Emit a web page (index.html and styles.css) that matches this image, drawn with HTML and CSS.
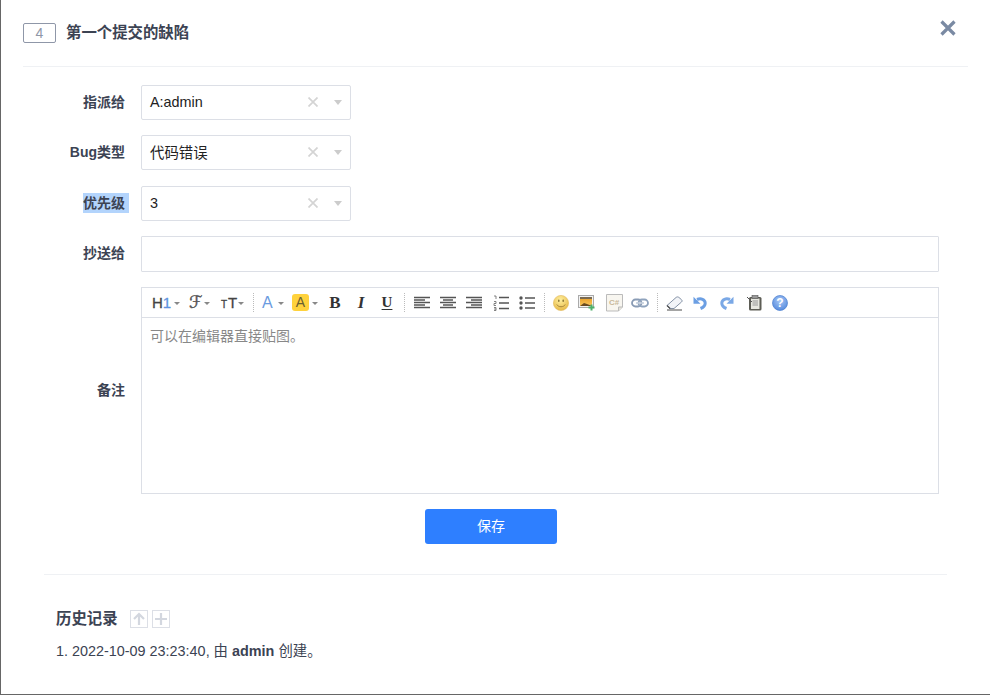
FILE: index.html
```html
<!DOCTYPE html>
<html lang="zh">
<head>
<meta charset="utf-8">
<title>第一个提交的缺陷</title>
<link rel="stylesheet" href="styles.css">
</head>
<body>
<div class="page">
  <header class="head">
    <span class="bug-id">4</span>
    <h1 class="bug-title">第一个提交的缺陷</h1>
    <svg class="close" width="18" height="18" viewBox="0 0 18 18"><path d="M2.500 2.500 15.500 15.500M15.500 2.500 2.500 15.500" stroke="#7a8aa3" stroke-width="3.200" fill="none"/></svg>
  </header>
  <form class="form">
    <div class="row">
      <label class="lbl">指派给</label>
      <div class="select"><span class="val">A:admin</span><svg class="clear" width="10" height="10" viewBox="0 0 10 10"><path d="M.5.500l9 9M9.500.500l-9 9" stroke="#d4d4d4" stroke-width="1.700"/></svg><span class="arrow"></span></div>
    </div>
    <div class="row r2">
      <label class="lbl">Bug类型</label>
      <div class="select"><span class="val">代码错误</span><svg class="clear" width="10" height="10" viewBox="0 0 10 10"><path d="M.5.500l9 9M9.500.500l-9 9" stroke="#d4d4d4" stroke-width="1.700"/></svg><span class="arrow"></span></div>
    </div>
    <div class="row r3">
      <label class="lbl"><span class="sel">优先级</span></label>
      <div class="select"><span class="val">3</span><svg class="clear" width="10" height="10" viewBox="0 0 10 10"><path d="M.5.500l9 9M9.500.500l-9 9" stroke="#d4d4d4" stroke-width="1.700"/></svg><span class="arrow"></span></div>
    </div>
    <div class="row r4">
      <label class="lbl">抄送给</label>
      <div class="textbox"></div>
    </div>
    <div class="row r5">
      <label class="lbl">备注</label>
      <div class="editor">
        <div class="toolbar">
          <span class="tb dd w37"><span class="h1">H<b>1</b></span><i class="caret"></i></span>
          <span class="tb dd w32"><span class="ff">ℱ</span><i class="caret tighter"></i></span>
          <span class="tb dd w32"><span class="tt"><small>T</small>T</span><i class="caret tight"></i></span>
          <span class="sep"></span>
          <span class="tb dd w30"><span class="fa">A</span><i class="caret"></i></span>
          <span class="tb dd w30"><span class="hl">A</span><i class="caret"></i></span>
          <span class="gap4"></span>
          <span class="tb"><span class="bb">B</span></span>
          <span class="tb"><span class="ii">I</span></span>
          <span class="tb"><span class="uu">U</span></span>
          <span class="sep"></span>
          <span class="tb"><svg width="16" height="14" viewBox="0 0 16 14"><path d="M0 1.500h16M0 4h11M0 6.500h16M0 9h11M0 11.500h16" stroke="#555" stroke-width="1.400"/></svg></span>
          <span class="tb"><svg width="16" height="14" viewBox="0 0 16 14"><path d="M0 1.500h16M3 4h10M0 6.500h16M3 9h10M0 11.500h16" stroke="#555" stroke-width="1.400"/></svg></span>
          <span class="tb"><svg width="16" height="14" viewBox="0 0 16 14"><path d="M0 1.500h16M5 4h11M0 6.500h16M5 9h11M0 11.500h16" stroke="#555" stroke-width="1.400"/></svg></span>
          <span class="tb shift"><svg width="16" height="16" viewBox="0 0 16 16"><path d="M6 2.500h10M6 8h10M6 13.500h10" stroke="#555" stroke-width="1.400"/><path d="M1 1h2v3M1 6.500h2v2H1v2h2M1 12.500h2v3H1M1 14h2" stroke="#666" stroke-width=".8" fill="none"/></svg></span>
          <span class="tb"><svg width="16" height="14" viewBox="0 0 16 14"><path d="M6 2h10M6 7h10M6 12h10" stroke="#555" stroke-width="1.400"/><circle cx="2" cy="2" r="1.700" fill="#555"/><circle cx="2" cy="7" r="1.700" fill="#555"/><circle cx="2" cy="12" r="1.700" fill="#555"/></svg></span>
          <span class="sep t"></span>
          <span class="tb"><svg width="16" height="16" viewBox="0 0 16 16"><defs><radialGradient id="sm" cx=".45" cy=".3" r=".8"><stop offset="0" stop-color="#ffef9e"/><stop offset="1" stop-color="#e3b23c"/></radialGradient></defs><circle cx="8" cy="8" r="7.600" fill="url(#sm)" stroke="#e2bb5e" stroke-width=".6"/><ellipse cx="5.800" cy="5.800" rx=".8" ry="1.200" fill="#8a7535"/><ellipse cx="10.200" cy="5.800" rx=".8" ry="1.200" fill="#8a7535"/><path d="M3.800 9.500c1.500 3 7 3 8.400 0" stroke="#a5833a" fill="none"/></svg></span>
          <span class="tb"><svg width="18" height="16" viewBox="0 0 18 16"><rect x=".5" y=".5" width="15" height="12" fill="#f2f2f2" stroke="#aaa"/><defs><linearGradient id="im" x1="0" y1="0" x2="0" y2="1"><stop offset="0" stop-color="#e89a20"/><stop offset="1" stop-color="#f8c860"/></linearGradient></defs><rect x="2" y="2" width="12" height="9" fill="url(#im)"/><path d="M2 2h12v2H2z" fill="#7a6a50"/><path d="M2 11l4-3 3 1 5 2z" fill="#6a4a20"/><path d="M13.500 9.500v6M10.500 12.500h6" stroke="#4db06a" stroke-width="2"/></svg></span>
          <span class="tb shift"><svg width="17" height="18" viewBox="0 0 17 18"><path d="M.5.500h16v12.500l-4 4H.5z" fill="#f8f6f0" stroke="#bbb"/><path d="M12.500 17v-4h4" fill="#e5e2d8" stroke="#bbb"/><text x="3" y="11" class="cs">C#</text></svg></span>
          <span class="tb"><svg width="18" height="10" viewBox="0 0 18 10"><rect x="1" y="1.500" width="9.500" height="7" rx="3.500" fill="none" stroke="#8a9cb5" stroke-width="1.800"/><rect x="7.500" y="1.500" width="9.500" height="7" rx="3.500" fill="none" stroke="#8fa3bd" stroke-width="1.800"/><path d="M5 5h8" stroke="#c4cedc" stroke-width="1.600"/></svg></span>
          <span class="sep t"></span>
          <span class="tb"><svg class="nudge" width="18" height="16" viewBox="0 0 18 16"><path d="M1 10.500 10 2.500c1-.8 2-.8 3 0l2.500 2.200c.8.800.8 1.600 0 2.300L8 13.500H3.500z" fill="#f2f4f8" stroke="#8391a5"/><path d="M1 10.500l3.200 3M1 15h15" stroke="#4a4a4a" stroke-width="1.100"/></svg></span>
          <span class="tb"><svg width="14" height="14" viewBox="0 0 14 14"><path d="M4 3.500C8 1.800 12 3.500 12.200 7 12.300 9.500 10 11.500 7.500 12.500" stroke="#6c9fe3" stroke-width="3" fill="none"/><path d="M.5.800v7h7z" fill="#6c9fe3"/></svg></span>
          <span class="tb shift"><svg width="14" height="14" viewBox="0 0 14 14"><path d="M10 3.500C6 1.800 2 3.500 1.800 7 1.700 9.500 4 11.500 6.500 12.500" stroke="#7aa8e6" stroke-width="3" fill="none"/><path d="M13.500.8v7h-7z" fill="#7aa8e6"/></svg></span>
          <span class="tb shift"><svg width="15" height="16" viewBox="0 0 15 16"><rect x="2" y="2" width="12.500" height="13.500" rx="1.500" fill="#5d5d55"/><rect x="4" y="3.500" width="8.500" height="10.500" fill="#e8e8e0"/><rect x="5" y=".5" width="6" height="3" fill="#999" stroke="#555" stroke-width=".6"/><path d="M5.500 6h5.500M5.500 8h5.500M5.500 10h5.500" stroke="#999"/><path d="M0 2l5 5" stroke="#555"/></svg></span>
          <span class="tb"><svg width="16" height="16" viewBox="0 0 16 16"><defs><radialGradient id="hp" cx=".5" cy=".35" r=".7"><stop offset="0" stop-color="#a9c8f5"/><stop offset="1" stop-color="#4f86dc"/></radialGradient></defs><circle cx="8" cy="8" r="7.500" fill="url(#hp)" stroke="#4a7fd0" stroke-width=".7"/><text x="8" y="12" class="q">?</text></svg></span>
        </div>
        <div class="area">可以在编辑器直接贴图。</div>
      </div>
    </div>
    <div class="actions"><button type="button" class="save">保存</button></div>
  </form>
  <section class="history">
    <div class="hist-head">
      <span class="hist-title">历史记录</span>
      <span class="hbtn"><svg width="14" height="14" viewBox="0 0 14 14"><path d="M7 13V2.500M2 7l5-5 5 5" stroke="#d3d7df" stroke-width="2.200" fill="none"/></svg></span>
      <span class="hbtn"><svg width="14" height="14" viewBox="0 0 14 14"><path d="M7 1v12M1 7h12" stroke="#d3d7df" stroke-width="2.200" fill="none"/></svg></span>
    </div>
    <ol class="hist-list">
      <li>2022-10-09 23:23:40, 由 <strong>admin</strong> 创建。</li>
    </ol>
  </section>
</div>
</body>
</html>
```
FILE: styles.css
```css
* { box-sizing: border-box; }
html, body { margin: 0; padding: 0; background: #fff; }
body { font-family: "Liberation Sans", "Noto Sans CJK SC", sans-serif; font-size: 13px; color: #3c4353; }
.page { width: 990px; height: 695px; border-left: 1px solid #666; border-bottom: 1px solid #666; padding: 0 22px 0 22px; overflow: hidden; }

.head { height: 67px; border-bottom: 1px solid #eff1f4; display: flex; align-items: flex-start; padding-top: 23px; position: relative; }
.bug-id { width: 33px; height: 20px; border: 1px solid #8f97a8; border-radius: 2px; font-size: 14px; line-height: 18px; text-align: center; color: #8f97a8; }
.bug-title { margin: 0 0 0 10px; font-size: 15.4px; line-height: 20px; font-weight: 700; color: #3c4353; }
.close { position: absolute; right: 11px; top: 19px; }

.form { padding-top: 18px; }
.row { display: flex; align-items: center; }
.r2, .r4, .r5 { margin-top: 15px; }
.r3 { margin-top: 16px; }
.lbl { width: 103px; margin-left: -1px; text-align: right; margin-right: 16px; margin-bottom: 2px; font-size: 14px; line-height: 20px; font-weight: 700; color: #3c4353; }
.sel { background: #b3d4fc; display: inline-block; padding-right: 4px; margin-right: -4px; }

.select { width: 210px; height: 35px; border: 1px solid #dcdfe6; border-radius: 2px; display: flex; align-items: center; padding-left: 8px; color: #222; font-size: 14.4px; }
.val { flex: 1; position: relative; top: -1px; }
.clear { flex: none; position: relative; top: -1px; }
.arrow { width: 0; height: 0; border: 4.5px solid transparent; border-top: 5px solid #ccc; border-bottom: 0; margin: 0 8px 0 16px; }

.textbox { width: 798px; height: 36px; border: 1px solid #dcdfe6; border-radius: 1px; }

.editor { width: 798px; height: 207px; border: 1px solid #dcdfe6; }
.toolbar { height: 30px; border-bottom: 1px solid #dcdfe6; display: flex; align-items: center; padding-left: 6px; }
.tb { width: 26px; height: 24px; display: flex; align-items: center; justify-content: center; flex: none; color: #444; }
.shift { margin-left: 1px; }
.nudge { margin-left: 2px; }
.dd { justify-content: flex-start; padding-left: 4px; }
.w37 { width: 37px; }
.w32 { width: 32px; }
.w30 { width: 30px; }
.gap4 { width: 4px; flex: none; }
.sep { width: 1px; height: 19px; margin: 0 4px; flex: none; border-left: 1px dotted #bbb; }
.sep.t { margin-right: 3px; }
.caret { width: 0; height: 0; border: 3px solid transparent; border-top: 3px solid #888; border-bottom: 0; margin: 2px 0 0 3px; }
.caret.tight { margin-left: 1px; }
.caret.tighter { margin-left: 0; }
.h1 { font: 15px/1 "Liberation Sans", sans-serif; -webkit-text-stroke: .3px #444; color: #444; }
.h1 b { font-weight: 400; color: #5d93e0; -webkit-text-stroke: .3px #5d93e0; }
.ff { font: 400 17px/1 "DejaVu Sans", serif; -webkit-text-stroke: .4px #555; color: #555; width: 15px; }
.tt { font: 15px/1 "Liberation Sans", sans-serif; -webkit-text-stroke: .3px #444; color: #444; }
.tt small { font-size: 10px; margin-right: 1px; }
.fa { font: 16px/1 "Liberation Sans", sans-serif; color: #6a9be0; width: 13px; }
.hl { width: 17px; height: 17px; background: #ffd23c; border-radius: 3px; text-align: center; font: 14px/17px "Liberation Sans", sans-serif; color: #6a5f30; }
.bb { font: 700 17px/1 "Liberation Serif", serif; color: #333; }
.ii { font: italic 700 17px/1 "Liberation Serif", serif; color: #333; }
.uu { font: 700 15px/1 "Liberation Serif", serif; color: #333; text-decoration: underline; text-underline-offset: 2px; }
.cs { font: 700 8px "Liberation Sans", sans-serif; fill: #c8b89a; }
.q { font: 700 12px "Liberation Sans", sans-serif; fill: #fff; text-anchor: middle; }

.area { padding: 9px 8px; font-size: 14px; line-height: 18px; color: #888; }

.actions { display: flex; justify-content: center; margin-top: 15px; padding-right: 9px; }
.save { width: 132px; height: 35px; background: #2e7fff; color: #fff; border: 0; border-radius: 3px; padding: 0 0 3px; font: 14px "Liberation Sans", "Noto Sans CJK SC", sans-serif; }

.history { margin: 30px 21px 0 21px; border-top: 1px solid #eff1f4; padding: 34px 0 0 12px; }
.hist-head { display: flex; align-items: center; height: 20px; }
.hist-title { font-size: 15.4px; font-weight: 700; line-height: 20px; margin-right: 12px; color: #3c4353; }
.hbtn { width: 18px; height: 18px; border: 1px solid #dcdfe6; display: flex; align-items: center; justify-content: center; margin-right: 4px; }
.hist-list { margin: 12px 0 0; padding: 0 0 0 16px; font-size: 14.4px; line-height: 20px; color: #3c4353; }
.hist-list strong { font-weight: 700; }
```
